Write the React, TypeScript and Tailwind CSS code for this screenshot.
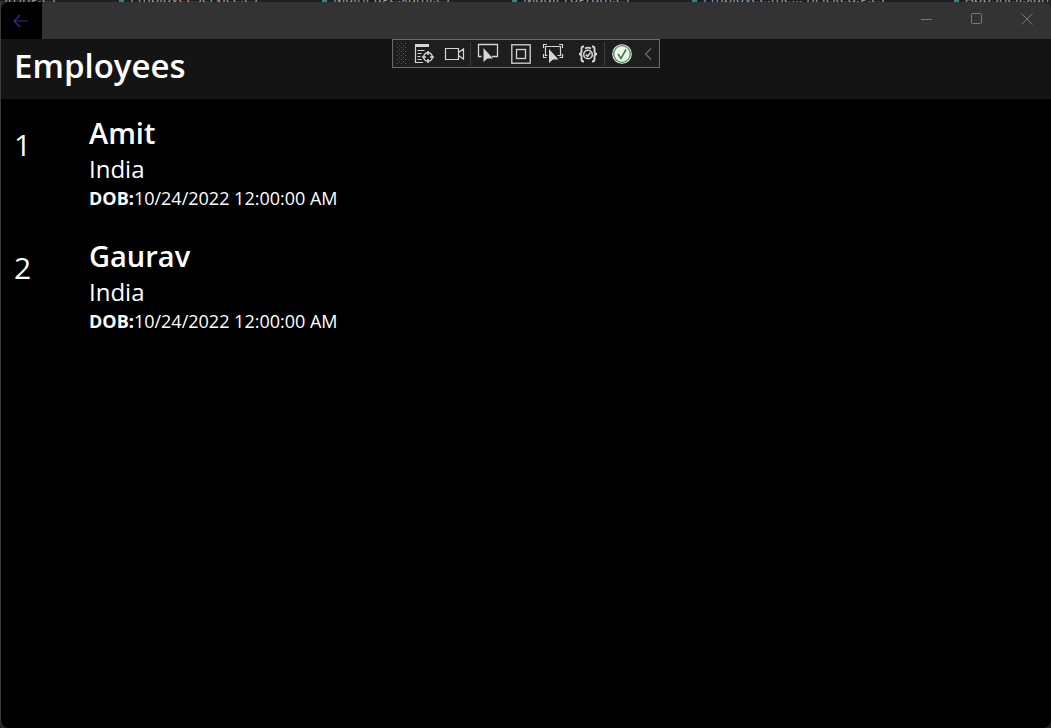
import React from "react";

type Employee = { id: number; name: string; country: string; dob: string };

const employees: Employee[] = [
  { id: 1, name: "Amit", country: "India", dob: "10/24/2022 12:00:00 AM" },
  { id: 2, name: "Gaurav", country: "India", dob: "10/24/2022 12:00:00 AM" },
];

const editorTabs = [
  { name: "String.cs", width: "w-[119px]", marker: false },
  { name: "EmployeeService.cs", width: "w-[203px]", marker: true },
  { name: "MainPage.xaml.cs", width: "w-[190px]", marker: true },
  { name: "MauiProgram.cs", width: "w-[180px]", marker: true },
  { name: "Employee.me... nLicked.g.cs", width: "w-[262px]", marker: true },
  { name: "AppShell.xaml", width: "w-[120px]", marker: true },
];

function EditorTabs() {
  return (
    <div className="flex h-0.5 shrink-0 items-end overflow-hidden bg-[#1f1f23] text-sm leading-2 text-[#a0a0a0]">
      {editorTabs.map((tab) => (
        <span key={tab.name} className={`flex shrink-0 items-end gap-1.5 whitespace-nowrap ${tab.width}`}>
          {tab.marker && <span className="h-3 w-[5px] bg-[#2f8580]" />}
          {tab.name}
        </span>
      ))}
    </div>
  );
}

function TitleBar() {
  return (
    <div className="flex h-[37px] shrink-0 items-stretch justify-between overflow-hidden rounded-t-lg bg-[#333333]">
      <button aria-label="Back" className="flex w-[41px] items-center justify-center bg-black pr-0.5 text-[#42239b]">
        <svg width="16" height="14" viewBox="0 0 16 14" fill="none" stroke="currentColor" strokeWidth="1.2">
          <path d="M15 7H1M7 1L1 7l6 6" />
        </svg>
      </button>
      <div className="flex text-[#777777]">
        <button aria-label="Minimize" className="flex w-[50px] items-center justify-center pb-1 pl-0.5">
          <svg width="12" height="12" viewBox="0 0 12 12" stroke="currentColor">
            <path d="M0 6.5h11" />
          </svg>
        </button>
        <button aria-label="Maximize" className="flex w-[50px] items-center justify-center pb-1 pl-0.5">
          <svg width="12" height="12" viewBox="0 0 12 12" fill="none" stroke="currentColor">
            <rect x="0.5" y="0.5" width="10" height="10" rx="1" />
          </svg>
        </button>
        <button aria-label="Close" className="flex w-[50px] items-center justify-center pb-1 pl-0.5">
          <svg width="12" height="12" viewBox="0 0 12 12" stroke="currentColor">
            <path d="M0.5 0.5l11 11M11.5 0.5l-11 11" />
          </svg>
        </button>
      </div>
    </div>
  );
}

const cursor = "M0 0V14L4 10.5H9.5Z";

function DebugToolbar() {
  return (
    <div
      role="toolbar"
      aria-label="Debug tools"
      className="absolute left-1/2 top-0 flex h-[29px] w-[268px] -translate-x-1/2 items-center border border-[#6a6a6a] bg-[#1e1e1e] text-[#d6d6d6]"
    >
      <span className="flex w-4 justify-center">
        <svg width="9" height="22" viewBox="0 0 9 22" fill="#5c5c5c">
          {[0, 4, 8, 12, 16, 20].map((y) => (
            <g key={y}>
              <rect x="0" y={y} width="1" height="1" />
              <rect x="4" y={y} width="1" height="1" />
              <rect x="8" y={y} width="1" height="1" />
              <rect x="2" y={y + 2} width="1" height="1" />
              <rect x="6" y={y + 2} width="1" height="1" />
            </g>
          ))}
        </svg>
      </span>
      <button aria-label="Go to live visual tree" className="flex w-[30px] justify-center">
        <svg width="22" height="22" viewBox="0 0 22 22" fill="none" stroke="currentColor" strokeWidth="1.2">
          <rect x="2" y="1" width="14" height="3" fill="currentColor" stroke="none" />
          <path d="M2.5 4v15.5H10M4.5 7.5h7M4.5 10.500h4M4.5 13.5h3M4.5 16.5h4" />
          <circle cx="15" cy="14" r="4.3" strokeWidth="1.5" />
          <path d="M15 8v4M15 16v4M9 14h4M17 14h4" strokeWidth="1.5" />
        </svg>
      </button>
      <button aria-label="Show in camera" className="flex w-[31px] justify-center">
        <svg width="22" height="16" viewBox="0 0 22 16" fill="none" stroke="currentColor" strokeWidth="1.2">
          <path d="M1.5 2.5h13v11h-13zM14.5 6.5l5-3.5v10l-5-3.5" />
        </svg>
      </button>
      <span className="h-6 w-px bg-[#3c3c3c]" />
      <button aria-label="Select element" className="flex w-[34px] justify-center">
        <svg width="22" height="22" viewBox="0 0 22 22" fill="none" stroke="currentColor" strokeWidth="1.3">
          <path d="M4.5 13.5h-3v-12h19v12H15" />
          <path d={cursor} transform="translate(6.500 5)" fill="currentColor" stroke="none" />
        </svg>
      </button>
      <button aria-label="Display layout adorners" className="flex w-[31px] justify-center">
        <svg width="20" height="20" viewBox="0 0 20 20" fill="none" stroke="currentColor" strokeWidth="1.3">
          <rect x="0.8" y="0.8" width="18.4" height="18.4" />
          <rect x="5.5" y="5.5" width="9" height="9" />
        </svg>
      </button>
      <button aria-label="Track focused element" className="flex w-[33px] justify-center">
        <svg width="22" height="22" viewBox="0 0 22 22" fill="none" stroke="currentColor" strokeWidth="1.2">
          <path d="M5.5 12.5h-2v-9h15v9h-3M1.500 5V1.5h3.500M17 1.5h3.500V5M1.500 11v3.500h3M20.500 11v3.500h-3" />
          <path d={cursor} transform="translate(7 6)" fill="currentColor" stroke="none" />
        </svg>
      </button>
      <button aria-label="Binding failures" className="flex w-[35px] justify-center pl-0.5">
        <svg width="20" height="18" viewBox="0 0 20 18" fill="none" stroke="currentColor" strokeWidth="1.9">
          <path d="M6 1.500H5.500Q3.500 1.500 3.500 3.500v3Q3.500 9 1 9q2.500 0 2.500 2.500v3q0 2 2 2H6M14 1.500h.5q2 0 2 2v3Q16.500 9 19 9q-2.500 0-2.500 2.500v3q0 2-2 2H14" />
          <path d="M7 3.500a6 6 0 0 1 6 0" />
          <circle cx="10" cy="9.500" r="4.300" strokeWidth="1.600" />
          <path d="M7.800 9.500l1.700 2L12.500 7.500" strokeWidth="1.500" />
        </svg>
      </button>
      <span className="h-6 w-px bg-[#3c3c3c]" />
      <button aria-label="Hot Reload" className="flex w-[33px] justify-center">
        <svg width="20" height="20" viewBox="0 0 20 20" fill="none">
          <circle cx="10" cy="10" r="9.800" fill="#f0f4ef" />
          <circle cx="10" cy="10" r="8.300" stroke="#42974a" strokeWidth="1.300" />
          <path d="M6 10l3 4.500L14 5.500" stroke="#2f8638" strokeWidth="1.600" />
        </svg>
      </button>
      <button aria-label="Collapse toolbar" className="flex w-5 justify-center text-[#6b6b6b]">
        <svg width="8" height="14" viewBox="0 0 8 14" fill="none" stroke="currentColor" strokeWidth="1.400">
          <path d="M7 1.500L1.500 7 7 12.500" />
        </svg>
      </button>
    </div>
  );
}

function EmployeeRow({ employee }: { employee: Employee }) {
  return (
    <li className="flex h-[123px] pl-[13px] pt-3.5">
      <span className="w-[75px] shrink-0 pt-3 text-3xl leading-10">{employee.id}</span>
      <div>
        <h2 className="text-[29px] font-semibold leading-10">{employee.name}</h2>
        <p className="text-2xl leading-8">{employee.country}</p>
        <p className="text-lg leading-[26px]">
          <strong className="font-bold">DOB:</strong>
          {employee.dob}
        </p>
      </div>
    </li>
  );
}

export default function App() {
  return (
    <div className="flex min-h-screen flex-col bg-[#242424] font-['Open_Sans',sans-serif] text-white">
      <EditorTabs />
      <div className="flex grow flex-col overflow-hidden rounded-b-lg border-l border-[#3a3a3a]">
        <TitleBar />
        <header className="relative h-[60px] shrink-0 bg-[#141414] pl-[13px]">
          <h1 className="text-[33px] font-semibold leading-[54px]">Employees</h1>
          <DebugToolbar />
        </header>
        <main className="grow bg-black">
          <ul>
            {employees.map((employee) => (
              <EmployeeRow key={employee.id} employee={employee} />
            ))}
          </ul>
        </main>
      </div>
    </div>
  );
}
